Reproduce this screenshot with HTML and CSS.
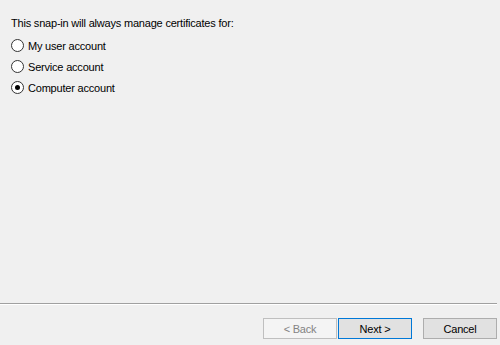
FILE: index.html
```html
<!DOCTYPE html>
<html lang="en">
<head>
  <meta charset="UTF-8">
  <title>Certificates snap-in</title>
  <link rel="stylesheet" href="styles.css">
</head>
<body>
<div class="wizard">
  <div class="page">
    <p class="intro">This snap-in will always manage certificates for:</p>
    <label class="option"><span class="radio"></span>My user account</label>
    <label class="option"><span class="radio"></span>Service account</label>
    <label class="option"><span class="radio checked"></span>Computer account</label>
  </div>
  <div class="footer">
    <div class="separator"></div>
    <div class="buttons">
      <button class="button disabled">&lt; Back</button>
      <button class="button default">Next &gt;</button>
      <button class="button cancel">Cancel</button>
    </div>
  </div>
</div>
</body>
</html>
```

FILE: styles.css
```css
body {
  margin: 0;
  background-color: #f0f0f0;
  font-family: "Segoe UI", "Liberation Sans", Arial, sans-serif;
  font-size: 11px;
  letter-spacing: -0.2px;
  color: #000000;
}
.wizard {
  display: flex;
  flex-direction: column;
  height: 345px;
}
.page {
  flex: 1;
  padding: 16px 0 0 11px;
}
.intro {
  margin: 0 0 4px 0;
  line-height: 15px;
}
.option {
  display: flex;
  align-items: center;
  height: 21px;
}
.radio {
  width: 11px;
  height: 11px;
  border: 1px solid #333333;
  border-radius: 50%;
  background-color: #ffffff;
  margin-right: 4px;
  position: relative;
  box-sizing: content-box;
}
.radio.checked::after {
  content: "";
  position: absolute;
  left: 3px;
  top: 3px;
  width: 5px;
  height: 5px;
  border-radius: 50%;
  background-color: #000000;
}
.separator {
  margin-right: 3px;
  border-top: 1px solid #a0a0a0;
  border-bottom: 1px solid #ffffff;
}
.buttons {
  display: flex;
  justify-content: flex-end;
  padding: 13px 3px 6px 0;
}
.button {
  width: 74px;
  height: 21px;
  padding: 0;
  font-family: inherit;
  font-size: 11px;
  letter-spacing: inherit;
  color: #000000;
  background-color: #e1e1e1;
  border: 1px solid #adadad;
}
.button.disabled {
  color: #838383;
  background-color: #f4f4f4;
  border-color: #bfbfbf;
}
.button.default {
  margin-left: 1px;
  border-color: #0078d7;
}
.button.cancel {
  margin-left: 11px;
}
```
